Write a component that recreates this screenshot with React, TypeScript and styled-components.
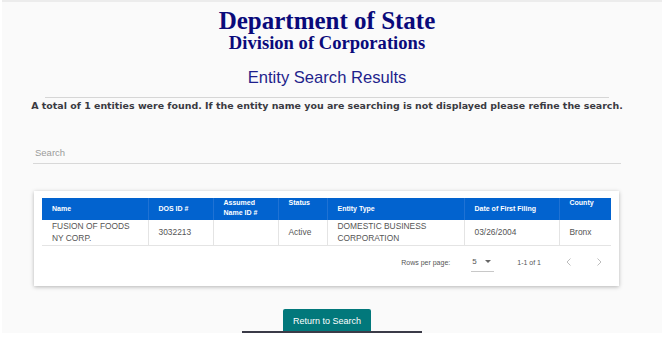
import React from 'react';
import styled, { createGlobalStyle } from 'styled-components';

const GlobalStyle = createGlobalStyle`
  html, body {
    margin: 0;
    padding: 0;
    background: #ffffff;
  }
  body {
    font-family: 'Liberation Sans', Arial, sans-serif;
  }
`;

const Page = styled.div`
  width: 650px;
  height: 331px;
  margin-left: 2px;
  padding-right: 10px;
  background: #fafafa;
  border-top: 2px solid #ececec;
  display: flex;
  flex-direction: column;
  align-items: center;
  position: relative;
  overflow: hidden;
`;

const Title = styled.h1`
  margin: 6px 0 0;
  font-family: 'Liberation Serif', 'Times New Roman', serif;
  font-weight: bold;
  font-size: 25px;
  line-height: 26px;
  color: #0a0a7a;
`;

const SubTitle = styled.h2`
  margin: -1px 0 0;
  font-family: 'Liberation Serif', 'Times New Roman', serif;
  font-weight: bold;
  font-size: 18.6px;
  line-height: 20px;
  color: #0a0a7a;
`;

const ResultsTitle = styled.h3`
  margin: 15px 0 0;
  font-weight: normal;
  font-size: 16.6px;
  line-height: 20px;
  color: #1f1f8c;
`;

const Rule = styled.div`
  width: 564px;
  height: 1px;
  margin-top: 9px;
  background: #d6d6d6;
`;

const Notice = styled.p`
  margin: 1px 0 0;
  font-family: 'DejaVu Sans', Verdana, sans-serif;
  font-weight: bold;
  font-size: 9.45px;
  line-height: 14px;
  color: #3a3a42;
  white-space: nowrap;
`;

const SearchField = styled.div`
  align-self: flex-start;
  margin: 34px 0 0 31px;
  width: 586px;
  border-bottom: 1px solid #d8d8d8;
  padding: 0 0 4px 2px;
  font-size: 9.5px;
  line-height: 12px;
  color: #9a9a9a;
`;

const Card = styled.div`
  align-self: flex-start;
  margin: 27px 0 0 32px;
  width: 570px;
  padding: 7px 7px 0 8px;
  background: #ffffff;
  box-shadow: 0 1px 4px rgba(0, 0, 0, 0.28);
`;

const Table = styled.table`
  width: 569px;
  border-collapse: collapse;
  table-layout: fixed;
`;

const HeadCell = styled.th<{ $top?: boolean; $w: number }>`
  width: ${(p) => p.$w}px;
  height: 22px;
  box-sizing: border-box;
  padding: 0 6px 0 10px;
  vertical-align: ${(p) => (p.$top ? 'top' : 'middle')};
  background: #0263cf;
  border-right: 1px solid #1f72d4;
  text-align: left;
  font-size: 7px;
  line-height: 10px;
  font-weight: bold;
  color: #ffffff;
  &:last-child {
    border-right: none;
  }
`;

const Cell = styled.td`
  height: 25px;
  box-sizing: border-box;
  padding: 0 10px 0 10px;
  border-right: 1px solid #e4e4e4;
  border-bottom: 1px solid #e4e4e4;
  font-size: 8.4px;
  line-height: 12px;
  color: #555555;
  &:last-child {
    border-right: none;
  }
`;

const Pagination = styled.div`
  display: flex;
  align-items: center;
  justify-content: flex-end;
  height: 40px;
  box-sizing: border-box;
  padding: 0 7px 7px 0;
  font-size: 7px;
  color: #555555;
`;

const RowsLabel = styled.span`
  margin-right: 21px;
`;

const Select = styled.div`
  display: flex;
  align-items: center;
  gap: 8px;
  width: 23px;
  height: 20px;
  box-sizing: border-box;
  border-bottom: 1px solid #c8c8c8;
  margin-right: 23px;
  font-size: 8px;
  padding-left: 1px;
`;

const Range = styled.span`
  margin-right: 4px;
`;

const NavButton = styled.span`
  display: flex;
  width: 12px;
  justify-content: center;
  margin-left: 18px;
  color: #bdbdbd;
`;

const ReturnButton = styled.button`
  margin-top: 23px;
  height: 24px;
  flex-shrink: 0;
  padding: 0 9.5px;
  border: none;
  border-radius: 2px 2px 0 0;
  background: #02787b;
  color: #ffffff;
  font-family: 'Liberation Sans', Arial, sans-serif;
  font-size: 9px;
`;

const BottomBar = styled.div`
  position: absolute;
  left: 240px;
  bottom: 0;
  width: 180px;
  height: 2px;
  background: #3b3b48;
`;

const Chevron = ({ dir }: { dir: 'left' | 'right' }) => (
  <svg width="8" height="10" viewBox="0 0 8 10" fill="none" stroke="currentColor" strokeWidth="1">
    {dir === 'left' ? <path d="M5.5 1.5L2 5l3.5 3.5" /> : <path d="M2.5 1.5L6 5 2.5 8.5" />}
  </svg>
);

const columns = [
  { label: 'Name', w: 106 },
  { label: 'DOS ID #', w: 65 },
  { label: 'Assumed Name ID #', w: 65, top: true },
  { label: 'Status', w: 49, top: true },
  { label: 'Entity Type', w: 137 },
  { label: 'Date of First Filing', w: 95 },
  { label: 'County', w: 52, top: true },
];

const rows = [
  ['FUSION OF FOODS NY CORP.', '3032213', '', 'Active', 'DOMESTIC BUSINESS CORPORATION', '03/26/2004', 'Bronx'],
];

export default function App() {
  return (
    <>
      <GlobalStyle />
      <Page>
        <Title>Department of State</Title>
        <SubTitle>Division of Corporations</SubTitle>
        <ResultsTitle>Entity Search Results</ResultsTitle>
        <Rule />
        <Notice>
          A total of 1 entities were found. If the entity name you are searching is not displayed please refine the search.
        </Notice>
        <SearchField>Search</SearchField>
        <Card>
          <Table>
            <thead>
              <tr>
                {columns.map((c) => (
                  <HeadCell key={c.label} $w={c.w} $top={c.top}>
                    {c.label}
                  </HeadCell>
                ))}
              </tr>
            </thead>
            <tbody>
              {rows.map((r, i) => (
                <tr key={i}>
                  {r.map((v, j) => (
                    <Cell key={j}>{v}</Cell>
                  ))}
                </tr>
              ))}
            </tbody>
          </Table>
          <Pagination>
            <RowsLabel>Rows per page:</RowsLabel>
            <Select>
              5
              <svg width="6" height="4" viewBox="0 0 6 4">
                <path d="M0 0h6L3 3z" fill="#666" />
              </svg>
            </Select>
            <Range>1-1 of 1</Range>
            <NavButton>
              <Chevron dir="left" />
            </NavButton>
            <NavButton>
              <Chevron dir="right" />
            </NavButton>
          </Pagination>
        </Card>
        <ReturnButton>Return to Search</ReturnButton>
        <BottomBar />
      </Page>
    </>
  );
}
